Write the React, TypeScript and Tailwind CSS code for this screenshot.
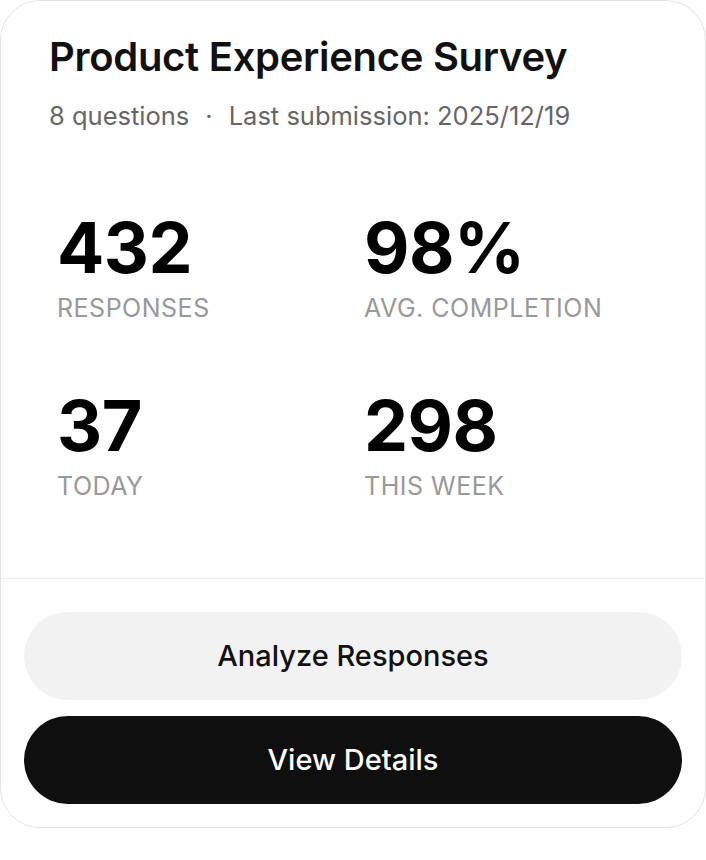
import type { ReactNode } from "react";

type Stat = { value: string; label: string };

const stats: Stat[] = [
  { value: "432", label: "Responses" },
  { value: "98%", label: "Avg. Completion" },
  { value: "37", label: "Today" },
  { value: "298", label: "This Week" },
];

function StatCell({ value, label }: Stat) {
  return (
    <div className="flex flex-col">
      <span className="text-[70px] font-bold leading-[82px] tracking-[-0.5px] text-black">
        {value}
      </span>
      <span className="mt-[4px] text-[25px] leading-[30px] uppercase tracking-[0.5px] text-[#999999]">
        {label}
      </span>
    </div>
  );
}

function PillButton({ dark, children }: { dark?: boolean; children: ReactNode }) {
  return (
    <button
      type="button"
      className={
        dark
          ? "h-[88px] w-full rounded-full bg-[#0f0f0f] text-[29px] font-medium text-white"
          : "h-[88px] w-full rounded-full bg-[#f2f2f2] text-[29px] font-medium text-[#111111]"
      }
    >
      {children}
    </button>
  );
}

export default function App() {
  return (
    <div
      className="min-h-screen bg-white"
      style={{ fontFamily: "Inter, 'Noto Sans', sans-serif" }}
    >
      <div className="w-[706px] overflow-hidden rounded-[40px] border border-[#e3e3e3] bg-white">
        <div className="px-[48px] pt-[32px] pb-[77px]">
          <h1 className="text-[40px] font-semibold leading-[48px] tracking-[-0.3px] text-[#111111]">
            Product Experience Survey
          </h1>
          <p className="mt-[19px] flex items-center text-[25.5px] leading-[32px] text-[#666666]">
            <span>8 questions</span>
            <span className="mx-[16px]">·</span>
            <span>Last submission: 2025/12/19</span>
          </p>

          <div className="mt-[75px] grid grid-cols-[307px_1fr] gap-y-[62px] pl-[8px]">
            {stats.map((s) => (
              <StatCell key={s.label} {...s} />
            ))}
          </div>
        </div>

        <div className="border-t border-[#eeeeee]" />

        <div className="flex flex-col gap-[16px] px-[23px] pt-[33px] pb-[23px]">
          <PillButton>Analyze Responses</PillButton>
          <PillButton dark>View Details</PillButton>
        </div>
      </div>
    </div>
  );
}
